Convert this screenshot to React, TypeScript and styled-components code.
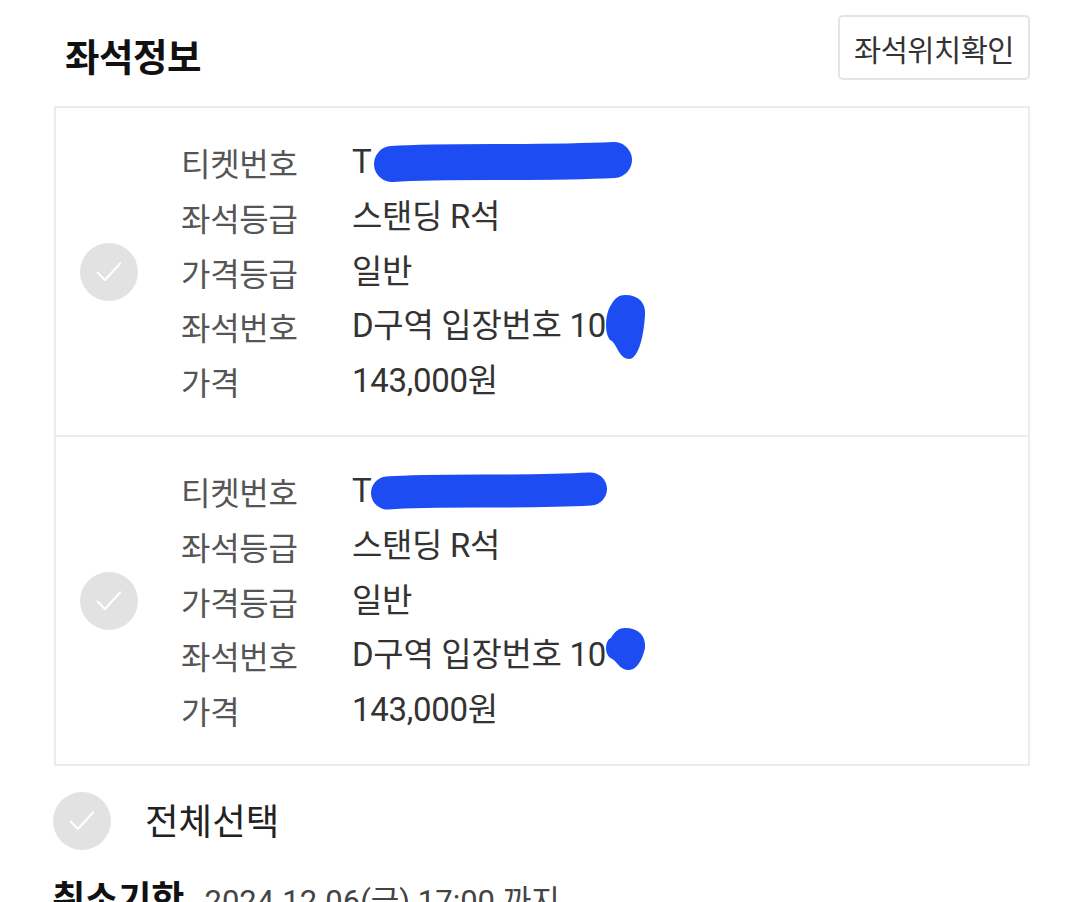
import React from "react";
import styled, { createGlobalStyle } from "styled-components";

const Global = createGlobalStyle`
  html, body { margin: 0; padding: 0; background: #ffffff; }
  body { font-family: Roboto, "Noto Sans CJK KR", sans-serif; }
  * { box-sizing: border-box; }
`;

const Page = styled.div`
  width: 1068px;
  height: 902px;
  overflow: hidden;
  padding: 15px 38px 0 54px;
  display: flex;
  flex-direction: column;
`;

const Header = styled.div`
  display: flex;
  justify-content: space-between;
  align-items: flex-start;
  height: 65px;
`;

const Title = styled.h2`
  margin: 22px 0 0 11px;
  font-size: 37.5px;
  line-height: 43px;
  font-weight: 700;
  color: #111;
  letter-spacing: -0.5px;
`;

const LocateButton = styled.button`
  height: 65px;
  width: 192px;
  padding: 0;
  border: 2px solid #e4e4e4;
  border-radius: 5px;
  background: #fff;
  font-family: Roboto, "Noto Sans CJK KR", sans-serif;
  font-size: 29.5px;
  color: #333;
  display: flex;
  align-items: center;
  justify-content: center;
  letter-spacing: -0.5px;
`;

const Card = styled.div`
  margin-top: 26px;
  border: 2px solid #ececec;
  display: flex;
  flex-direction: column;
`;

const Item = styled.div<{ $divider?: boolean }>`
  display: flex;
  align-items: center;
  padding: 0 0 0 24px;
  border-top: ${(p) => (p.$divider ? "2px solid #ececec" : "none")};
  height: ${(p) => (p.$divider ? 329 : 327)}px;
`;

const CheckCircle = styled.div<{ $size?: number }>`
  width: ${(p) => p.$size ?? 58}px;
  height: ${(p) => p.$size ?? 58}px;
  border-radius: 50%;
  background: #e2e2e2;
  display: flex;
  align-items: center;
  justify-content: center;
  flex-shrink: 0;
`;

const Rows = styled.div`
  margin-left: 43px;
  display: flex;
  flex-direction: column;
  flex: 1;
`;

const Row = styled.div`
  display: grid;
  grid-template-columns: 171px 1fr;
  align-items: center;
  height: 54.6px;
`;

const Label = styled.span`
  font-size: 32px;
  color: #555;
  letter-spacing: -0.3px;
`;

const Value = styled.span`
  position: relative;
  font-size: 33px;
  line-height: 38px;
  color: #333;
  letter-spacing: -0.3px;
  white-space: nowrap;
`;

const Scribble = styled.svg`
  position: absolute;
  overflow: visible;
  pointer-events: none;
`;

const SelectAll = styled.div`
  margin-top: 26px;
  display: flex;
  align-items: center;
  gap: 34px;
  margin-left: -1px;
`;

const SelectText = styled.span`
  font-size: 36.5px;
  color: #222;
  margin-top: -4px;
`;

const Deadline = styled.div`
  margin-top: 26px;
  display: flex;
  align-items: baseline;
  gap: 20px;
  margin-left: -2px;
`;

const DeadlineTitle = styled.span`
  font-size: 36px;
  line-height: 44px;
  font-weight: 700;
  color: #111;
`;

const DeadlineText = styled.span`
  font-size: 31px;
  color: #444;
`;

const Check = ({ size = 58 }: { size?: number }) => (
  <CheckCircle $size={size}>
    <svg width={size * 0.55} height={size * 0.55} viewBox="0 0 24 24" fill="none">
      <path d="M3.5 12.5 L9 18 L20.5 5.5" stroke="#fff" strokeWidth="1.6" strokeLinecap="round" strokeLinejoin="round" />
    </svg>
  </CheckCircle>
);

const BLUE = "#1d4cf2";

const LongScribble = ({ left, width, thick }: { left: number; width: number; thick: number }) => (
  <Scribble style={{ left, top: 0, width, height: 38 }} viewBox={`0 0 ${width} 38`}>
    <path
      d={`M${thick / 2} 21 C ${width * 0.3} 17, ${width * 0.6} 21, ${width - thick / 2} 17`}
      stroke={BLUE}
      strokeWidth={thick}
      strokeLinecap="round"
      fill="none"
    />
  </Scribble>
);

const Blob = ({ top, h }: { top: number; h: number }) => (
  <Scribble style={{ left: 251, top, width: 44, height: h }} viewBox={`0 0 44 ${h}`}>
    <path
      d={`M22 2 C 36 2, 43 10, 42 22 C 41 ${h * 0.6}, 36 ${h - 2}, 26 ${h - 2} C 16 ${h - 2}, 14 ${h * 0.75}, 8 ${h * 0.7} C 1 ${h * 0.62}, 2 ${h * 0.3}, 8 12 C 12 5, 16 2, 22 2 Z`}
      fill={BLUE}
    />
  </Scribble>
);

type Ticket = { left: number; width: number; thick: number; blobTop: number; blobH: number };

const tickets: Ticket[] = [
  { left: 22, width: 258, thick: 36, blobTop: -14, blobH: 68 },
  { left: 19, width: 236, thick: 33, blobTop: -10, blobH: 46 },
];

export default function App() {
  return (
    <>
      <Global />
      <Page>
        <Header>
          <Title>좌석정보</Title>
          <LocateButton>좌석위치확인</LocateButton>
        </Header>
        <Card>
          {tickets.map((t, i) => (
            <Item key={i} $divider={i > 0}>
              <Check />
              <Rows>
                <Row>
                  <Label>티켓번호</Label>
                  <Value>
                    T
                    <LongScribble left={t.left} width={t.width} thick={t.thick} />
                  </Value>
                </Row>
                <Row>
                  <Label>좌석등급</Label>
                  <Value>스탠딩 R석</Value>
                </Row>
                <Row>
                  <Label>가격등급</Label>
                  <Value>일반</Value>
                </Row>
                <Row>
                  <Label>좌석번호</Label>
                  <Value>
                    D구역 입장번호 10
                    <Blob top={t.blobTop} h={t.blobH} />
                  </Value>
                </Row>
                <Row>
                  <Label>가격</Label>
                  <Value>143,000원</Value>
                </Row>
              </Rows>
            </Item>
          ))}
        </Card>
        <SelectAll>
          <Check />
          <SelectText>전체선택</SelectText>
        </SelectAll>
        <Deadline>
          <DeadlineTitle>취소기한</DeadlineTitle>
          <DeadlineText>2024.12.06(금) 17:00 까지</DeadlineText>
        </Deadline>
      </Page>
    </>
  );
}
